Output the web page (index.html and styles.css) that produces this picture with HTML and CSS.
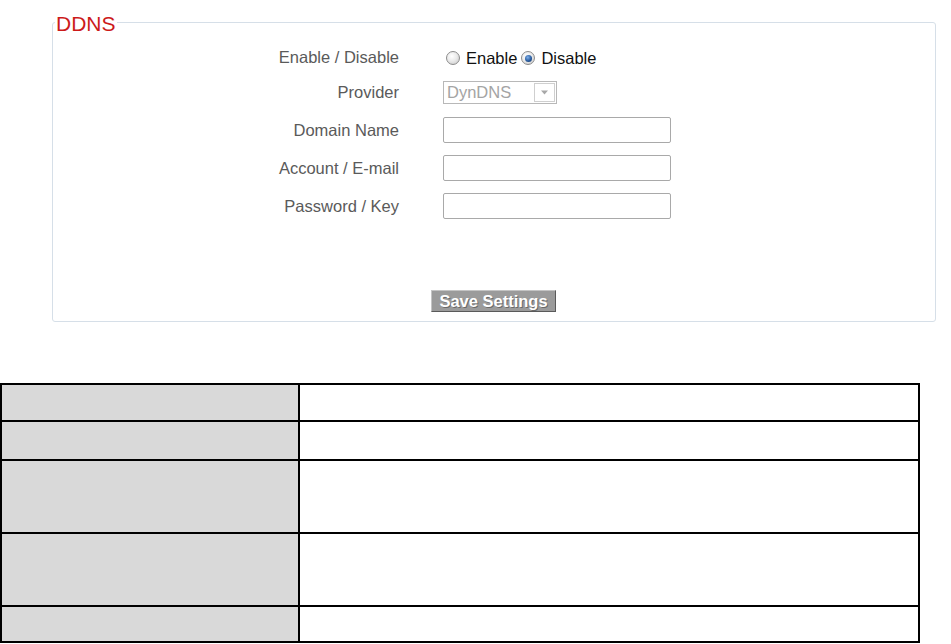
FILE: index.html
```html
<!DOCTYPE html>
<html>
<head>
<meta charset="utf-8">
<link rel="stylesheet" href="styles.css">
</head>
<body>
<fieldset class="panel">
  <legend class="panel-title">DDNS</legend>
  <div class="form-grid">
    <div class="label">Enable / Disable</div>
    <div class="control radios">
      <span class="radio"></span><span class="radio-text">Enable</span>
      <span class="radio checked"></span><span class="radio-text">Disable</span>
    </div>
    <div class="label">Provider</div>
    <div class="control">
      <div class="select"><span class="select-text">DynDNS</span><span class="select-arrow"><svg width="9" height="5" viewBox="0 0 9 5"><path d="M1 0.5 L8 0.5 L4.5 4.5 Z" fill="#a8a8a8"/></svg></span></div>
    </div>
    <div class="label">Domain Name</div>
    <div class="control"><input class="text-input" type="text"></div>
    <div class="label">Account / E-mail</div>
    <div class="control"><input class="text-input" type="text"></div>
    <div class="label">Password / Key</div>
    <div class="control"><input class="text-input" type="text"></div>
  </div>
  <div class="actions"><button class="save-btn">Save Settings</button></div>
</fieldset>

<table class="desc-table">
  <tr class="r1"><td class="key"></td><td class="val"></td></tr>
  <tr class="r2"><td class="key"></td><td class="val"></td></tr>
  <tr class="r3"><td class="key"></td><td class="val"></td></tr>
  <tr class="r3"><td class="key"></td><td class="val"></td></tr>
  <tr class="r5"><td class="key"></td><td class="val"></td></tr>
</table>
</body>
</html>
```

FILE: styles.css
```css
html, body {
  margin: 0;
  padding: 0;
  background: #fff;
  font-family: "Liberation Sans", Arial, sans-serif;
}

.panel {
  margin: 10px 0 0 52px;
  width: 884px;
  box-sizing: border-box;
  border: 1px solid #d6dfe8;
  border-radius: 3px;
  padding: 0 0 9px 0;
  min-width: 0;
}

.panel-title {
  color: #cc1a1a;
  font-size: 21px;
  line-height: 24px;
  padding: 0 1px;
  margin-left: 2px;
  position: relative;
  top: 2px;
}

.form-grid {
  display: grid;
  grid-template-columns: 346px 1fr;
  grid-template-rows: 32px 38px 38px 38px 38px;
  column-gap: 44px;
  padding-top: 7px;
  align-items: center;
}

.label {
  text-align: right;
  color: #5a5a5a;
  font-size: 16.5px;
}

.control {
  display: flex;
  align-items: center;
}

.radios {
  padding-left: 3px;
  font-size: 16.5px;
  color: #111;
  padding-top: 2px;
}

.radio {
  width: 12px;
  height: 12px;
  border-radius: 50%;
  border: 1px solid #8c8c8c;
  background: radial-gradient(circle at 40% 35%, #ffffff 0%, #ebebeb 45%, #c4c4c4 100%);
  box-sizing: content-box;
  flex: none;
  display: flex;
  align-items: center;
  justify-content: center;
}

.radio.checked::after {
  content: "";
  width: 7px;
  height: 7px;
  border-radius: 50%;
  background: radial-gradient(circle at 40% 35%, #7fb0ea 0%, #2a5da0 55%, #0f2f5e 100%);
}

.radio-text {
  margin-left: 6px;
  margin-right: 4px;
}

.select {
  width: 114px;
  height: 23px;
  box-sizing: border-box;
  border: 1px solid #b8b8b8;
  display: flex;
  align-items: center;
  justify-content: space-between;
  padding: 0 1px 0 3px;
  background: #fff;
}

.select-text {
  color: #a4a4a4;
  font-size: 16.5px;
}

.select-arrow {
  width: 21px;
  height: 19px;
  box-sizing: border-box;
  border: 1px solid #cfcfcf;
  display: flex;
  align-items: center;
  justify-content: center;
}

.text-input {
  width: 228px;
  height: 26px;
  box-sizing: border-box;
  border: 1px solid #a9a9a9;
  border-radius: 2px;
  margin: 0;
  padding: 0 4px;
  font-size: 15px;
  font-family: "Liberation Sans", Arial, sans-serif;
}

.actions {
  display: flex;
  justify-content: center;
  padding-top: 65px;
}

.save-btn {
  width: 125px;
  height: 22px;
  box-sizing: border-box;
  background: #9b9b9b;
  color: #fff;
  font-family: "Liberation Sans", Arial, sans-serif;
  font-weight: bold;
  font-size: 16.5px;
  border: 1px solid;
  border-color: #c4c4c4 #5a5a5a #5a5a5a #c4c4c4;
  padding: 0;
  line-height: 18px;
  text-shadow: 1px 1px 0 #6a6a6a;
  margin-left: -1px;
}

.desc-table {
  margin-top: 61px;
  width: 920px;
  border-collapse: collapse;
}

.desc-table td {
  border: 2px solid #000;
  padding: 0;
}

.desc-table .key {
  width: 296px;
  background: #d9d9d9;
}

.desc-table .val {
  background: #fff;
}

.r1 { height: 37px; }
.r2 { height: 39px; }
.r3 { height: 73px; }
.r5 { height: 36px; }
```
